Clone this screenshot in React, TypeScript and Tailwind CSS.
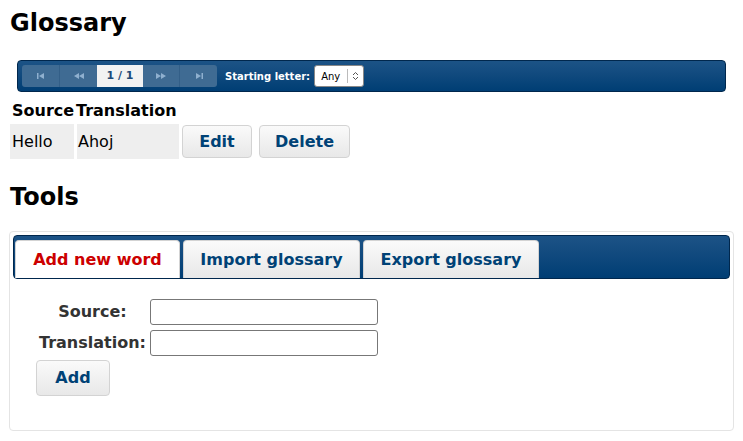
const PagerIcon = ({ kind }: { kind: 'first' | 'prev' | 'next' | 'last' }) => {
  if (kind === 'first')
    return (
      <svg width="8" height="6" viewBox="0 0 8 6" fill="#8fb0cf">
        <rect x="0" y="0" width="1.5" height="6" />
        <path d="M7 0v6L2 3z" />
      </svg>
    );
  if (kind === 'last')
    return (
      <svg width="8" height="6" viewBox="0 0 8 6" fill="#8fb0cf">
        <rect x="6.5" y="0" width="1.5" height="6" />
        <path d="M1 0v6l5-3z" />
      </svg>
    );
  if (kind === 'prev')
    return (
      <svg width="10" height="6" viewBox="0 0 10 6" fill="#8fb0cf">
        <path d="M5 0v6L0 3zM10 0v6L5 3z" />
      </svg>
    );
  return (
    <svg width="10" height="6" viewBox="0 0 10 6" fill="#8fb0cf">
      <path d="M0 0v6l5-3zM5 0v6l5-3z" />
    </svg>
  );
};

const GrayButton = ({ label, className }: { label: string; className: string }) => (
  <button
    className={
      "rounded-[4px] border border-[#d3d3d3] bg-gradient-to-b from-[#fafafa] to-[#e8e8e8] font-bold text-[#004276] " +
      className
    }
  >
    {label}
  </button>
);

export default function App() {
  return (
    <div className="min-h-[441px] bg-white font-['DejaVu_Sans',sans-serif] text-black">
      <h2 className="px-[10px] pt-[8px] text-[24px] font-bold leading-[30px]">Glossary</h2>

      {/* pager */}
      <div className="mx-[17px] mt-[22px] flex h-[32px] items-center rounded-[4px] border border-[#00274d] bg-gradient-to-b from-[#1c5386] to-[#003e74] px-[4px]">
        <div className="flex h-[22px] overflow-hidden rounded-[3px] bg-[#3f6b93]">
          <button className="flex w-[38px] items-center justify-center border-r border-[#335f88]">
            <PagerIcon kind="first" />
          </button>
          <button className="flex w-[37px] items-center justify-center">
            <PagerIcon kind="prev" />
          </button>
          <div className="flex w-[46px] items-center justify-center bg-[#f2f2f2] text-[11px] font-bold text-[#1d4a78]">
            1 / 1
          </div>
          <button className="flex w-[37px] items-center justify-center border-r border-[#335f88]">
            <PagerIcon kind="next" />
          </button>
          <button className="flex w-[37px] items-center justify-center">
            <PagerIcon kind="last" />
          </button>
        </div>
        <span className="ml-[8px] text-[10px] font-bold text-white">Starting letter:</span>
        <div className="ml-[4px] flex h-[22px] w-[50px] items-center rounded-[3px] border border-[#888] bg-white pl-[6px] text-[10px] text-black">
          <span className="w-[26px]">Any</span>
          <span className="flex h-[14px] flex-1 flex-col items-center justify-center border-l border-[#bbb] text-[#555]">
            <svg width="7" height="10" viewBox="0 0 7 10" fill="none" stroke="#555" strokeWidth="1">
              <path d="M1 4l2.5-2.5L6 4M1 6l2.5 2.5L6 6" />
            </svg>
          </span>
        </div>
      </div>

      {/* glossary table */}
      <div className="mt-[9px] px-[10px]">
        <div className="flex text-[16px] font-bold leading-[20px]">
          <span className="w-[65px] pl-[2px]">Source</span>
          <span className="pl-[1px]">Translation</span>
        </div>
        <div className="mt-[3px] flex items-center gap-[2px]">
          <div className="flex h-[35px] w-[64px] items-center bg-[#eeeeee] pl-[2px] text-[16px]">Hello</div>
          <div className="ml-[1px] flex h-[35px] w-[102px] items-center bg-[#eeeeee] pl-[1px] text-[16px]">Ahoj</div>
          <GrayButton label="Edit" className="ml-[1px] h-[33px] w-[70px] text-[16px]" />
          <GrayButton label="Delete" className="ml-[5px] h-[33px] w-[91px] text-[16px]" />
        </div>
      </div>

      <h2 className="mt-[23px] px-[10px] text-[24px] font-bold leading-[30px]">Tools</h2>

      {/* tabs */}
      <div className="mx-[9px] mt-[19px] h-[200px] rounded-[4px] border border-[#e4e4e4] p-[3px]">
        <div className="flex h-[44px] items-end rounded-[4px] border border-[#00274d] bg-gradient-to-b from-[#1c5386] to-[#003e74] pl-[1px]">
          <div className="flex h-[38px] w-[165px] items-center justify-center rounded-t-[4px] border border-b-0 border-[#d3d3d3] bg-white text-[16px] font-bold text-[#cc0000]">
            Add new word
          </div>
          <div className="ml-[3px] flex h-[38px] w-[177px] items-center justify-center rounded-t-[4px] border border-b-0 border-[#d3d3d3] bg-gradient-to-b from-[#fafafa] to-[#e8e8e8] text-[16px] font-bold text-[#004276]">
            Import glossary
          </div>
          <div className="ml-[3px] flex h-[38px] w-[176px] items-center justify-center rounded-t-[4px] border border-b-0 border-[#d3d3d3] bg-gradient-to-b from-[#fafafa] to-[#e8e8e8] text-[16px] font-bold text-[#004276]">
            Export glossary
          </div>
        </div>

        <div className="pl-[23px] pt-[20px]">
          <div className="ml-[3px] grid w-fit grid-cols-[auto_228px] items-center gap-x-[4px] gap-y-[5px] text-[16px] font-bold text-[#333]">
            <span className="text-center">Source:</span>
            <input className="h-[26px] rounded-[3px] border border-[#777] bg-white" />
            <span>Translation:</span>
            <input className="h-[26px] rounded-[3px] border border-[#777] bg-white" />
          </div>
          <GrayButton label="Add" className="mt-[4px] h-[36px] w-[74px] text-[16px]" />
        </div>
      </div>
    </div>
  );
}
